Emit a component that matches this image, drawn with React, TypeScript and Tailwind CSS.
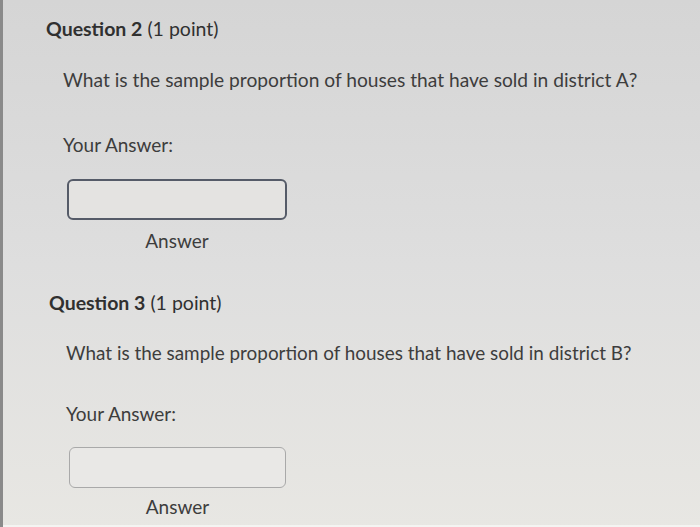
import React from 'react'

type Props = {
  num: number
  district: string
  bodyClass: string
  labelClass: string
  wrapClass: string
  boxClass: string
  answerClass: string
}

function Question({ num, district, bodyClass, labelClass, wrapClass, boxClass, answerClass }: Props) {
  return (
    <div className="flex flex-col">
      <h2 className="text-[19.5px] leading-[24px] text-[#303030]">
        <span className="font-bold">Question {num}</span> (1 point)
      </h2>
      <p className={`pl-[17px] leading-[24px] text-[#3d3d3d] ${bodyClass}`}>
        What is the sample proportion of houses that have sold in district {district}?
      </p>
      <p className={`pl-[17px] text-[19px] leading-[22px] text-[#3d3d3d] ${labelClass}`}>Your Answer:</p>
      <div className={`flex flex-col items-center ${wrapClass}`}>
        <div className={`h-[41px] w-full rounded-[6px] ${boxClass}`} />
        <span className={`text-[19px] leading-[22px] text-[#3d3d3d] ${answerClass}`}>Answer</span>
      </div>
    </div>
  )
}

export default function App() {
  return (
    <div
      className="flex h-[527px] w-[700px] overflow-hidden border-l-[3px] border-[#8a8a8a] bg-gradient-to-b from-[#d5d5d5] via-[#dedede] to-[#e8e7e3]"
      style={{ fontFamily: 'Lato, "Open Sans", sans-serif' }}
    >
      <div className="flex flex-1 flex-col">
        <div className="pl-[43px] pt-[17px]">
          <Question
            num={2}
            district="A"
            bodyClass="mt-[27px] text-[19.2px]"
            labelClass="mt-[42px]"
            wrapClass="mt-[23px] ml-[21px] w-[220px]"
            boxClass="border-2 border-[#555b68] bg-[#e4e3e1]"
            answerClass="mt-[10px]"
          />
        </div>
        <div className="pl-[46px] pt-[39px]">
          <Question
            num={3}
            district="B"
            bodyClass="mt-[26px] text-[18.9px]"
            labelClass="mt-[38px]"
            wrapClass="mt-[22px] ml-[20px] w-[217px]"
            boxClass="border-[1.5px] border-[#a9a9a9] bg-[#e9e8e6]"
            answerClass="mt-[8px]"
          />
        </div>
        <div className="mt-auto h-[2px] w-full bg-[#f4f4f2]" />
      </div>
    </div>
  )
}
